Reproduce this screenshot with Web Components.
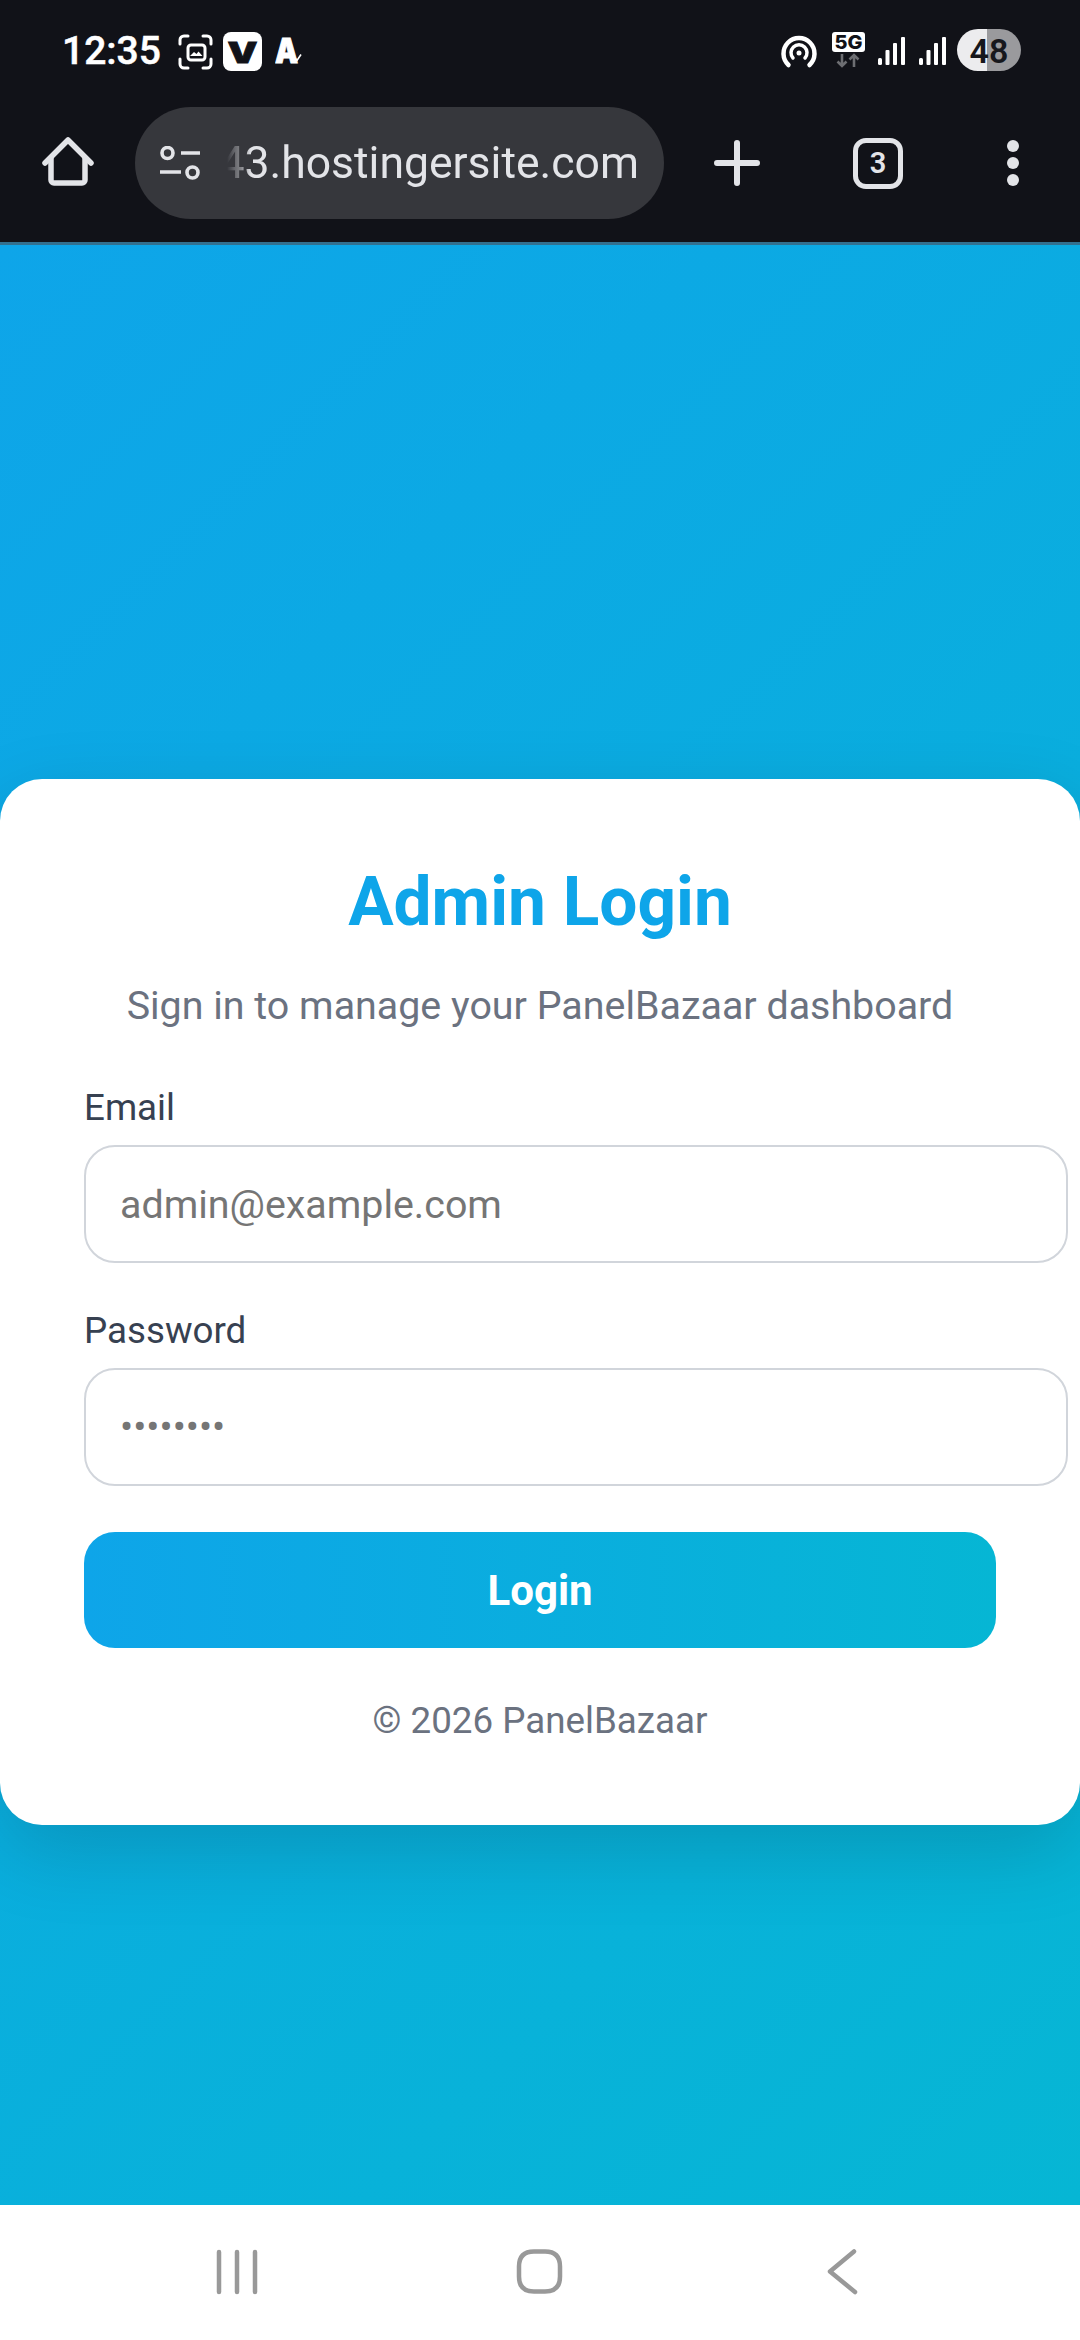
<!DOCTYPE html>
<html lang="en">
<head>
<meta charset="utf-8">
<title>Admin Login</title>
<style>
  html, body { margin: 0; padding: 0; }
  body { width: 1080px; height: 2340px; overflow: hidden; font-family: Roboto, "Liberation Sans", sans-serif; }
</style>
</head>
<body>
<phone-page>
  <status-strip slot="chrome"></status-strip>
  <browser-toolbar slot="chrome" url="43.hostingersite.com" tabs="3"></browser-toolbar>
  <login-card heading="Admin Login" tagline="Sign in to manage your PanelBazaar dashboard" footer="© 2026 PanelBazaar">
    <form-field label="Email" placeholder="admin@example.com"></form-field>
    <form-field label="Password" placeholder="••••••••" masked></form-field>
    <gradient-button>Login</gradient-button>
  </login-card>
  <nav-strip slot="nav"></nav-strip>
</phone-page>

<script>
class PhonePage extends HTMLElement {
  constructor() {
    super();
    this.attachShadow({ mode: "open" });
  }

  connectedCallback() {
    this.shadowRoot.innerHTML = `
      <style>
        :host {
          display: flex;
          flex-direction: column;
          width: 1080px;
          height: 2340px;
        }
        main {
          flex: 1;
          min-height: 0;
          padding-top: 534px;
          background: linear-gradient(135deg, #0ea5e9, #06b6d4);
          overflow: hidden;
        }
      </style>
      <slot name="chrome"></slot>
      <main><slot></slot></main>
      <slot name="nav"></slot>
    `;
  }
}

class StatusStrip extends HTMLElement {
  constructor() {
    super();
    this.attachShadow({ mode: "open" });
  }

  connectedCallback() {
    this.shadowRoot.innerHTML = `
      <style>
        :host {
          display: flex;
          justify-content: space-between;
          height: 107px;
          padding: 0 59px 0 62px;
          background: #111218;
          color: #fff;
        }
        .group { display: flex; }
        .time {
          font: 500 39px/102px Roboto, sans-serif;
          width: 97px;
          white-space: nowrap;
          -webkit-text-stroke: .5px #fff;
        }
        svg { display: block; flex: none; }
        text { font-family: Inter, Roboto, sans-serif; }
      </style>
      <div class="group">
        <span class="time">12:35</span>
        <svg style="margin-left:19px" width="35" height="104" viewBox="178 0 35 104" fill="none" stroke="#fff" stroke-width="3" stroke-linecap="round">
          <path d="M180 44v-4a4 4 0 0 1 4-4h4M203 36h4a4 4 0 0 1 4 4v4M180 59v5a4 4 0 0 0 4 4h4M203 68h4a4 4 0 0 0 4-4v-5"/>
          <rect x="188" y="45" width="17" height="15" rx="3" stroke-width="3"/>
          <path d="M190 56l4-4 2.500 2 2-2.500 4 4.500z" fill="#fff" stroke="none"/>
        </svg>
        <svg style="margin-left:10px" width="39" height="104" viewBox="223 0 39 104">
          <rect x="223" y="32" width="39" height="39" rx="8" fill="#fff"/>
          <text x="242.500" y="63" text-anchor="middle" font-size="28" font-weight="900" fill="#111218" stroke="#111218" stroke-width=".8" textLength="30" lengthAdjust="spacingAndGlyphs">V</text>
        </svg>
        <svg style="margin-left:13px" width="30" height="104" viewBox="275 0 30 104">
          <text x="275" y="63" font-size="34" font-weight="900" fill="#fff" stroke="#fff" stroke-width="1" textLength="23" lengthAdjust="spacingAndGlyphs">A</text>
          <path d="M295 58l2 2.500 4-6" fill="none" stroke="#fff" stroke-width="1.600"/>
        </svg>
      </div>
      <div class="group">
        <svg width="36" height="104" viewBox="781 0 36 104" fill="none" stroke="#fff" stroke-width="4.500" stroke-linecap="round">
          <path d="M788.500 65a15.500 15.500 0 1 1 21 0"/>
          <path d="M793 58a8 8 0 1 1 12 0" stroke-width="3.500"/>
          <circle cx="799" cy="53" r="2.500" fill="#fff" stroke="none"/>
        </svg>
        <svg style="margin-left:15px" width="33" height="104" viewBox="832 0 33 104">
          <rect x="832" y="32" width="33" height="20" rx="3" fill="#fff"/>
          <text x="848.500" y="48.500" text-anchor="middle" font-size="19" font-weight="800" fill="#111218" textLength="28" lengthAdjust="spacingAndGlyphs">5G</text>
          <path d="M842 54v12M837.500 61.500l4.500 4.500 4.500-4.500M854 67v-12M849.500 59.500l4.500-4.500 4.500 4.500" fill="none" stroke="#6d6e72" stroke-width="2.600"/>
        </svg>
        <svg style="margin-left:13px" width="27" height="104" viewBox="878 0 27 104" fill="#fff">
          <rect x="878" y="58" width="4" height="7" rx="1.500"/>
          <rect x="885.500" y="50" width="4" height="15" rx="1"/>
          <rect x="893" y="43" width="4" height="22" rx="1"/>
          <rect x="901" y="37" width="4" height="28" rx="1"/>
        </svg>
        <svg style="margin-left:14px" width="27" height="104" viewBox="919 0 27 104" fill="#fff">
          <rect x="919" y="58" width="4" height="7" rx="1.500"/>
          <rect x="926.500" y="50" width="4" height="15" rx="1"/>
          <rect x="934" y="43" width="4" height="22" rx="1"/>
          <rect x="942" y="37" width="4" height="28" rx="1"/>
        </svg>
        <svg style="margin-left:11px" width="64" height="104" viewBox="957 0 64 104">
          <clipPath id="pill"><rect x="957" y="29" width="64" height="42" rx="21"/></clipPath>
          <g clip-path="url(#pill)">
            <rect x="957" y="29" width="30" height="42" fill="#ececee"/>
            <rect x="987" y="29" width="34" height="42" fill="#9a9a9d"/>
          </g>
          <text x="989" y="62.500" text-anchor="middle" font-size="34" font-weight="600" fill="#16171c" style="font-family:Roboto,sans-serif">48</text>
        </svg>
      </div>
    `;
  }
}

class BrowserToolbar extends HTMLElement {
  constructor() {
    super();
    this.attachShadow({ mode: "open" });
  }

  connectedCallback() {
    const url = this.getAttribute("url") || "";
    const tabs = this.getAttribute("tabs") || "1";
    this.shadowRoot.innerHTML = `
      <style>
        :host {
          display: flex;
          align-items: center;
          height: 112px;
          padding: 0 0 23px 42px;
          background: #111218;
          border-bottom: 3px solid #33708f;
          color: #e3e4e8;
          font-family: Roboto, sans-serif;
        }
        svg { display: block; flex: none; }
        .pill {
          display: flex;
          align-items: center;
          justify-content: space-between;
          box-sizing: border-box;
          width: 529px;
          height: 112px;
          margin-left: 41px;
          padding: 0 25px 0 24px;
          border-radius: 56px;
          background: #36373c;
        }
        .url {
          font-size: 44.500px;
          line-height: 60px;
          white-space: nowrap;
          -webkit-mask-image: linear-gradient(90deg, transparent 8px, rgba(0,0,0,.3) 16px, rgba(0,0,0,.45) 22px, #000 32px);
          mask-image: linear-gradient(90deg, transparent 8px, rgba(0,0,0,.3) 16px, rgba(0,0,0,.45) 22px, #000 32px);
        }
        .tabs {
          display: flex;
          align-items: center;
          justify-content: center;
          box-sizing: border-box;
          width: 50px;
          height: 51px;
          margin-left: 93px;
          border: 5.500px solid #e3e4e8;
          border-radius: 13px;
          font-size: 29px;
          font-weight: 600;
        }
        .menu { margin-left: 103px; }
      </style>
      <svg width="52" height="52" viewBox="0 0 52 52" fill="none" stroke="#e3e4e8" stroke-width="5.500" stroke-linecap="round" stroke-linejoin="round">
        <path d="M3 26L26 3l23 23"/>
        <path d="M9 21v22a3 3 0 0 0 3 3h28a3 3 0 0 0 3-3V21"/>
      </svg>
      <div class="pill">
        <svg width="42" height="34" viewBox="0 0 42 34" fill="none" stroke="#e3e4e8" stroke-width="3.600">
          <circle cx="8.500" cy="7" r="5.500"/>
          <path d="M22 7h19M1 26h21"/>
          <circle cx="33.500" cy="26.500" r="5.500"/>
        </svg>
        <span class="url">${url}</span>
      </div>
      <svg style="margin-left:50px" width="46" height="46" viewBox="0 0 46 46" stroke="#e3e4e8" stroke-width="6" stroke-linecap="round">
        <path d="M3 23h40M23 3v40"/>
      </svg>
      <div class="tabs">${tabs}</div>
      <svg class="menu" width="14" height="48" viewBox="0 0 14 48" fill="#e3e4e8">
        <circle cx="7" cy="7" r="6"/>
        <circle cx="7" cy="24" r="6"/>
        <circle cx="7" cy="41" r="6"/>
      </svg>
    `;
  }
}

class LoginCard extends HTMLElement {
  constructor() {
    super();
    this.attachShadow({ mode: "open" });
  }

  connectedCallback() {
    this.shadowRoot.innerHTML = `
      <style>
        :host {
          display: block;
          box-sizing: border-box;
          width: 1080px;
          height: 1046px;
          padding: 79px 84px 0;
          background: #fff;
          border-radius: 42px;
          box-shadow: 0 26px 79px rgba(0, 0, 0, .15);
          font-family: Roboto, sans-serif;
        }
        h1 {
          margin: 0;
          color: #0ea5e9;
          font-size: 67.600px;
          font-weight: 700;
          line-height: 88px;
          text-align: center;
        }
        p {
          margin: 0;
          text-align: center;
          white-space: nowrap;
          color: #6b7280;
        }
        .tagline { margin-top: 35px; font-size: 39.400px; line-height: 50px; margin-bottom: 55px; }
        .footer { margin-top: 50px; font-size: 36.750px; line-height: 46px; }
      </style>
      <h1>${this.getAttribute("heading")}</h1>
      <p class="tagline">${this.getAttribute("tagline")}</p>
      <slot></slot>
      <p class="footer">${this.getAttribute("footer")}</p>
    `;
  }
}

class FormField extends HTMLElement {
  constructor() {
    super();
    this.attachShadow({ mode: "open" });
  }

  connectedCallback() {
    const masked = this.hasAttribute("masked");
    this.shadowRoot.innerHTML = `
      <style>
        :host {
          display: block;
          margin-bottom: 46px;
          font-family: Roboto, sans-serif;
        }
        label {
          display: block;
          height: 44px;
          margin-bottom: 15px;
          color: #374151;
          font-size: 36.750px;
          line-height: 44px;
        }
        .box {
          display: flex;
          align-items: center;
          box-sizing: content-box;
          width: 100%;
          height: 114px;
          padding: 0 34px;
          border: 2px solid #d1d5db;
          border-radius: 31px;
          color: #757575;
          font-size: 39.400px;
          white-space: nowrap;
        }
        .box.masked { font-size: 39px; }
      </style>
      <label>${this.getAttribute("label")}</label>
      <div class="box${masked ? " masked" : ""}">${this.getAttribute("placeholder")}</div>
    `;
  }
}

class GradientButton extends HTMLElement {
  constructor() {
    super();
    this.attachShadow({ mode: "open" });
  }

  connectedCallback() {
    this.shadowRoot.innerHTML = `
      <style>
        :host {
          display: flex;
          align-items: center;
          justify-content: center;
          height: 116px;
          border-radius: 31px;
          background: linear-gradient(90deg, #0ea5e9, #06b6d4);
          color: #fff;
          font: 700 42px Roboto, sans-serif;
        }
      </style>
      <slot></slot>
    `;
  }
}

class NavStrip extends HTMLElement {
  constructor() {
    super();
    this.attachShadow({ mode: "open" });
  }

  connectedCallback() {
    this.shadowRoot.innerHTML = `
      <style>
        :host {
          display: block;
          height: 135px;
          background: #fff;
        }
        svg { display: block; }
      </style>
      <svg width="1080" height="135" viewBox="0 2205 1080 135" fill="none" stroke="#999" stroke-width="4.500" stroke-linecap="round" stroke-linejoin="round">
        <path d="M219 2252v40M237 2252v40M255 2252v40"/>
        <path d="M534 2251.500h11q15 0 15 15v10q0 15-15 15h-11q-15 0-15-15v-10q0-15 15-15z"/>
        <path d="M854 2251.500L830 2271.500l25 20.500"/>
      </svg>
    `;
  }
}

customElements.define("phone-page", PhonePage);
customElements.define("status-strip", StatusStrip);
customElements.define("browser-toolbar", BrowserToolbar);
customElements.define("login-card", LoginCard);
customElements.define("form-field", FormField);
customElements.define("gradient-button", GradientButton);
customElements.define("nav-strip", NavStrip);
</script>
</body>
</html>
